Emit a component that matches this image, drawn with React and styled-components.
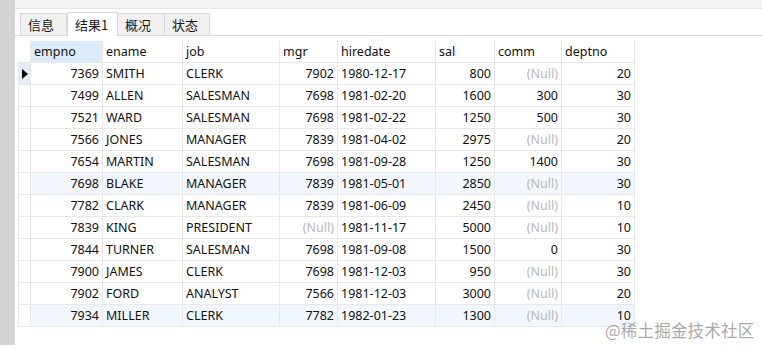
import React from "react";
import styled, { createGlobalStyle } from "styled-components";

const Global = createGlobalStyle`
  html, body { margin: 0; padding: 0; background: #ffffff; }
  body { font-family: "Noto Sans", "Noto Sans CJK SC", sans-serif; }
`;

const Page = styled.div`
  position: relative;
  width: 762px;
  height: 350px;
  display: flex;
  overflow: hidden;
  background: #ffffff;
`;

const Sidebar = styled.div`
  width: 15px;
  height: 345px;
  background: #d4d4d4;
  flex: none;
`;

const Main = styled.div`
  flex: 1;
  display: flex;
  flex-direction: column;
  align-items: flex-start;
`;

const TopBand = styled.div`
  align-self: stretch;
  height: 8px;
  background: #f3f3f3;
  border-bottom: 1px solid #e6e6e6;
`;

const TabBar = styled.div`
  align-self: stretch;
  display: flex;
  align-items: flex-end;
  height: 26px;
  padding-left: 5px;
  border-bottom: 1px solid #d9d9d9;
`;

const Tab = styled.div`
  box-sizing: border-box;
  width: ${(p) => p.$w}px;
  height: ${(p) => (p.$active ? 24 : 22)}px;
  padding-left: 7px;
  display: flex;
  align-items: center;
  font-family: "Noto Sans CJK SC", sans-serif;
  font-size: 13px;
  color: #1a1a1a;
  background: ${(p) => (p.$active ? "#ffffff" : "#f0f0f0")};
  border: 1px solid #d9d9d9;
  border-left-width: ${(p) => (p.$first || p.$active ? 1 : 0)}px;
  border-bottom: none;
  margin-bottom: ${(p) => (p.$active ? -1 : 0)}px;
  position: relative;
`;

const Grid = styled.table`
  width: 616px;
  margin: 5px 0 0 3px;
  border-collapse: collapse;
  table-layout: fixed;
  font-family: "Noto Sans", sans-serif;
  font-size: 12.5px;
  color: #111;
`;

const Cell = styled.td`
  height: 21px;
  padding: 0 3px;
  border: 1px solid #e8e8e8;
  text-align: ${(p) => (p.$right ? "right" : "left")};
  white-space: nowrap;
  overflow: hidden;
  color: ${(p) => (p.$null ? "#b8b8b8" : "#111")};
`;

const HeadCell = styled.th`
  height: 21px;
  padding: 0 3px;
  border: 1px solid #e8e8e8;
  border-top: none;
  font-weight: normal;
  text-align: left;
  background: ${(p) => (p.$sel ? "#dcebfa" : "#ffffff")};
`;

const IndHead = styled.th`
  border: none;
  border-bottom: 1px solid #e8e8e8;
  padding: 0;
`;

const IndCell = styled.td`
  padding: 0;
  border: 1px solid #e8e8e8;
  background: ${(p) => (p.$cur ? "#e3eefa" : "#ffffff")};
  vertical-align: middle;
`;

const Row = styled.tr`
  background: ${(p) => (p.$hl ? "#f1f7fd" : "#ffffff")};
`;

const Watermark = styled.div`
  position: absolute;
  left: 605px;
  top: 318px;
  font-family: "Noto Sans CJK SC", sans-serif;
  font-size: 16.5px;
  color: rgba(140, 140, 140, 0.75);
  letter-spacing: 0.2px;
  white-space: nowrap;
`;

const cols = [
  { key: "empno", w: 72, right: true },
  { key: "ename", w: 80 },
  { key: "job", w: 97 },
  { key: "mgr", w: 58, right: true },
  { key: "hiredate", w: 98 },
  { key: "sal", w: 59, right: true },
  { key: "comm", w: 67, right: true },
  { key: "deptno", w: 73, right: true },
];

const N = null;
const data = [
  [7369, "SMITH", "CLERK", 7902, "1980-12-17", 800, N, 20],
  [7499, "ALLEN", "SALESMAN", 7698, "1981-02-20", 1600, 300, 30],
  [7521, "WARD", "SALESMAN", 7698, "1981-02-22", 1250, 500, 30],
  [7566, "JONES", "MANAGER", 7839, "1981-04-02", 2975, N, 20],
  [7654, "MARTIN", "SALESMAN", 7698, "1981-09-28", 1250, 1400, 30],
  [7698, "BLAKE", "MANAGER", 7839, "1981-05-01", 2850, N, 30],
  [7782, "CLARK", "MANAGER", 7839, "1981-06-09", 2450, N, 10],
  [7839, "KING", "PRESIDENT", N, "1981-11-17", 5000, N, 10],
  [7844, "TURNER", "SALESMAN", 7698, "1981-09-08", 1500, 0, 30],
  [7900, "JAMES", "CLERK", 7698, "1981-12-03", 950, N, 30],
  [7902, "FORD", "ANALYST", 7566, "1981-12-03", 3000, N, 20],
  [7934, "MILLER", "CLERK", 7782, "1982-01-23", 1300, N, 10],
];

const tabs = [
  { label: "信息", w: 47 },
  { label: "结果1", w: 51, active: true },
  { label: "概况", w: 47 },
  { label: "状态", w: 45 },
];

export default function App() {
  return (
    <>
      <Global />
      <Page>
        <Sidebar />
        <Main>
          <TopBand />
          <TabBar>
            {tabs.map((t, i) => (
              <Tab key={t.label} $w={t.w} $active={t.active} $first={i === 0}>
                {t.label}
              </Tab>
            ))}
          </TabBar>
          <Grid>
            <colgroup>
              <col style={{ width: 12 }} />
              {cols.map((c) => (
                <col key={c.key} style={{ width: c.w }} />
              ))}
            </colgroup>
            <thead>
              <tr>
                <IndHead />
                {cols.map((c, i) => (
                  <HeadCell key={c.key} $sel={i === 0}>
                    {c.key}
                  </HeadCell>
                ))}
              </tr>
            </thead>
            <tbody>
              {data.map((r, ri) => (
                <Row key={ri} $hl={ri === 5 || ri === 11}>
                  <IndCell $cur={ri === 0}>
                    {ri === 0 && (
                      <svg width="6" height="10" viewBox="0 0 6 10" style={{ display: "block", marginLeft: 3 }}>
                        <path d="M0 0 L6 5 L0 10 Z" fill="#000" />
                      </svg>
                    )}
                  </IndCell>
                  {r.map((v, ci) => (
                    <Cell key={ci} $right={cols[ci].right} $null={v === null}>
                      {v === null ? "(Null)" : v}
                    </Cell>
                  ))}
                </Row>
              ))}
            </tbody>
          </Grid>
        </Main>
        <Watermark>@稀土掘金技术社区</Watermark>
      </Page>
    </>
  );
}
